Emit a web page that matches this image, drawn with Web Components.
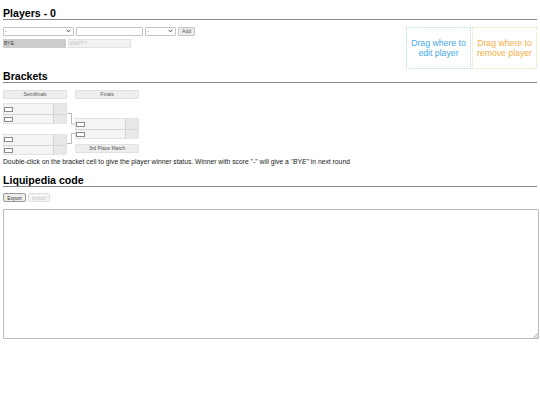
<!DOCTYPE html>
<html>
<head>
<meta charset="utf-8">
<style>
html, body { margin: 0; background: #fff; }
body { padding: 0 3px; font-family: "Liberation Sans", Arial, sans-serif; color: #000; overflow: hidden; }
</style>
</head>
<body>
<x-heading style="margin-top:6px">Players - 0</x-heading>
<x-players></x-players>
<x-heading>Brackets</x-heading>
<x-bracket></x-bracket>
<x-note>Double-click on the bracket cell to give the player winner status. Winner with score "-" will give a <i>"BYE"</i> in next round</x-note>
<x-heading style="margin-top:6.5px">Liquipedia code</x-heading>
<x-code></x-code>

<script>
'use strict';

const arrow = `url("data:image/svg+xml,%3Csvg xmlns='http://www.w3.org/2000/svg' width='5' height='4'%3E%3Cpath d='M.6 .8L2.5 2.8L4.4 .8' fill='none' stroke='%23444' stroke-width='1'/%3E%3C/svg%3E")`;

class XHeading extends HTMLElement {
    constructor() {
        super();
        this.attachShadow({mode: 'open'}).innerHTML = `
            <style>
            :host {
                display: block;
                box-sizing: border-box;
                height: 14px;
                padding-top: 2px;
                font-size: 10.6px;
                font-weight: bold;
                line-height: 11px;
                border-bottom: 1px solid #888;
                width: 534px;
            }
            </style>
            <slot></slot>`;
    }
}

class XDropZone extends HTMLElement {
    constructor() {
        super();
        this.attachShadow({mode: 'open'}).innerHTML = `
            <style>
            :host {
                box-sizing: border-box;
                display: flex;
                align-items: center;
                justify-content: center;
                width: 65px;
                height: 42px;
                border: 1px dotted var(--line);
                font-size: 8.7px;
                line-height: 10.5px;
                text-align: center;
            }
            </style>
            <div><slot></slot></div>`;
    }
}

class XPlayers extends HTMLElement {
    constructor() {
        super();
        this.attachShadow({mode: 'open'}).innerHTML = `
            <style>
            :host { display: flex; justify-content: space-between; height: 42px; margin-top: 7px; width: 534px; }
            .row { display: flex; align-items: flex-start; gap: 2px; }
            select, input, button {
                box-sizing: border-box;
                height: 8.5px;
                margin: 0;
                padding: 0 1px;
                font: 5px "Liberation Sans", Arial, sans-serif;
                background: #fff;
                border: 1px solid #c4c4c4;
                border-radius: 1px;
                color: #555;
                appearance: none;
            }
            select { background: #fff ${arrow} no-repeat right 2px center; }
            .s1 { width: 71px; }
            .in { width: 67px; }
            .s2 { width: 31px; }
            button { width: 17px; background: #eee; text-align: center; }
            .cells { display: flex; gap: 2px; margin-top: 3px; }
            .cell {
                box-sizing: border-box;
                display: flex;
                align-items: center;
                width: 63px;
                height: 9.5px;
                padding: 0 1px;
                font-size: 5px;
            }
            .bye { background: #ccc; color: #444; }
            .empty { background: #f2f2f2; border: 1px solid #e2e2e2; color: #c4c4c4; }
            .zones { display: flex; gap: 1px; }
            .edit { color: #45a9e6; --line: #b4d9f2; }
            .remove { color: #f3ad45; --line: #f8dcb4; }
            </style>
            <div>
                <div class="row">
                    <select class="s1"><option>-</option></select>
                    <input class="in">
                    <select class="s2"><option>-</option></select>
                    <button>Add</button>
                </div>
                <div class="cells">
                    <div class="cell bye">BYE</div>
                    <div class="cell empty">EMPTY</div>
                </div>
            </div>
            <div class="zones">
                <x-drop-zone class="edit">Drag where to<br>edit player</x-drop-zone>
                <x-drop-zone class="remove">Drag where to<br>remove player</x-drop-zone>
            </div>`;
    }
}

class XMatch extends HTMLElement {
    constructor() {
        super();
        this.attachShadow({mode: 'open'}).innerHTML = `
            <style>
            :host {
                display: grid;
                grid-template-columns: 50px 12px;
                grid-auto-rows: 10px;
                border: 1px solid #e2e2e2;
                box-sizing: border-box;
                width: 64px;
                height: 21px;
                background: #f4f4f4;
            }
            .name { border-right: 1px solid #d4d4d4; display: flex; align-items: center; }
            .name.b { border-top: 1px solid #d4d4d4; }
            .score { background: #e8e8e8; }
            .score.b { border-top: 1px solid #d4d4d4; }
            i {
                display: block;
                box-sizing: border-box;
                width: 9px;
                height: 5px;
                border: 1px solid #8a8a8a;
                background: #fff;
            }
            </style>
            <div class="name"><i></i></div><div class="score"></div>
            <div class="name b"><i></i></div><div class="score b"></div>`;
    }
}

class XBracket extends HTMLElement {
    constructor() {
        super();
        this.attachShadow({mode: 'open'}).innerHTML = `
            <style>
            :host { display: grid; grid-template-columns: 64px 8px 64px; grid-template-rows: 8px auto; margin-top: 7px; width: 136px; height: 64px; }
            .title {
                box-sizing: border-box;
                display: flex;
                align-items: center;
                justify-content: center;
                height: 8.5px;
                background: #eee;
                border: 1px solid #e0e0e0;
                border-radius: 1px;
                font-size: 5px;
                color: #555;
            }
            .semis { display: flex; flex-direction: column; gap: 9.5px; margin-top: 5px; }
            .gap { position: relative; }
            .gap svg { position: absolute; left: 0; top: 0; }
            .finals { display: flex; flex-direction: column; gap: 5px; margin-top: 20px; }
            </style>
            <div class="title">Semifinals</div>
            <div></div>
            <div class="title">Finals</div>
            <div class="semis"><x-match></x-match><x-match></x-match></div>
            <div class="gap">
                <svg width="8" height="56" fill="none" stroke="#aaa" stroke-width=".8">
                    <path d="M0 15.5H4.5V26H8M0 45.5H4.5V35.5H8"/>
                </svg>
            </div>
            <div class="finals"><x-match></x-match><div class="title">3rd Place Match</div></div>`;
    }
}

class XNote extends HTMLElement {
    constructor() {
        super();
        this.attachShadow({mode: 'open'}).innerHTML = `
            <style>
            :host { display: block; font-size: 6.75px; line-height: 8px; margin-top: 4px; white-space: nowrap; color: #222; }
            </style>
            <slot></slot>`;
    }
}

class XCode extends HTMLElement {
    constructor() {
        super();
        this.attachShadow({mode: 'open'}).innerHTML = `
            <style>
            :host { display: block; margin-top: 6.5px; }
            .btns { display: flex; gap: 2px; }
            button {
                box-sizing: border-box;
                height: 9px;
                margin: 0;
                padding: 0;
                font: 5px "Liberation Sans", Arial, sans-serif;
                border: 1px solid #999;
                border-radius: 2px;
                background: #eee;
                color: #333;
            }
            .export { width: 23px; }
            .import { width: 22px; border-color: #e0e0e0; color: #c4c4c4; background: #f4f4f4; }
            textarea {
                display: block;
                box-sizing: border-box;
                width: 536px;
                height: 129.5px;
                margin: 7px 0 0;
                border: 1px solid #bbb;
                border-radius: 1px;
                background: #fff;
            }
            textarea::-webkit-resizer {
                background: linear-gradient(135deg, transparent 45%, #ccc 45%, #ccc 62%, transparent 62%, transparent 75%, #ccc 75%, #ccc 92%, transparent 92%) no-repeat right bottom / 5px 5px;
            }
            </style>
            <div class="btns">
                <button class="export">Export</button>
                <button class="import" disabled>Import</button>
            </div>
            <textarea></textarea>`;
    }
}

customElements.define('x-heading', XHeading);
customElements.define('x-drop-zone', XDropZone);
customElements.define('x-players', XPlayers);
customElements.define('x-match', XMatch);
customElements.define('x-bracket', XBracket);
customElements.define('x-note', XNote);
customElements.define('x-code', XCode);
</script>
</body>
</html>
